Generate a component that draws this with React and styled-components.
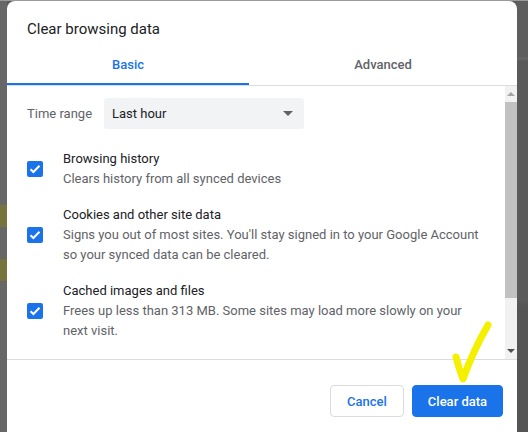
import React from 'react';
import styled, { createGlobalStyle } from 'styled-components';

const GlobalStyle = createGlobalStyle`
    html, body {
        margin: 0;
        padding: 0;
        background: #5b5b5b;
        font-family: Roboto, "Liberation Sans", Arial, sans-serif;
        overflow: hidden;
    }
`

const Page = styled.div`
    width: 528px;
    height: 432px;
    display: flex;
    border-top: 1px solid #9a9a9a;
    box-sizing: border-box;
    overflow: hidden;
`

const LeftEdge = styled.div`
    width: 7px;
    background: #676767;
    display: flex;
    flex-direction: column;
    padding-top: 204px;
    gap: 32px;
`

const Highlight = styled.div`
    height: ${props => props.h}px;
    background: #77733d;
`

const RightEdge = styled.div`
    flex: 1;
    background: linear-gradient(#5e5e5e 0, #5e5e5e 56px, #6a6a6a 57px, #5a5a5a 60px, #5a5a5a 300px, #555 305px);
`

const Dialog = styled.div`
    position: relative;
    width: 510px;
    height: 460px;
    background: #fff;
    border-radius: 8px 8px 0 0;
    display: flex;
    flex-direction: column;
`

const Title = styled.div`
    padding: 18px 20px 0 20px;
    font-size: 15px;
    line-height: 20px;
    color: #202124;
`

const Tabs = styled.div`
    margin-top: 4px;
    display: flex;
    height: 42px;
    border-bottom: 1px solid #dadce0;
`

const Tab = styled.div`
    width: ${props => props.w ? props.w + 'px' : 'auto'};
    flex: ${props => props.w ? 'none' : 1};
    display: flex;
    align-items: center;
    justify-content: center;
    font-size: 13px;
    font-weight: 500;
    color: ${props => props.active ? '#1a73e8' : '#5f6368'};
    box-shadow: ${props => props.active ? 'inset 0 -2px 0 #1a73e8' : 'none'};
`

const Body = styled.div`
    height: 273px;
    display: flex;
    border-bottom: 1px solid #dadce0;
`

const List = styled.div`
    flex: 1;
    padding: 12px 20px 0 20px;
    display: flex;
    flex-direction: column;
`

const RangeRow = styled.div`
    display: flex;
    align-items: center;
    height: 31px;
    margin-bottom: 20px;
`

const RangeLabel = styled.span`
    width: 77px;
    font-size: 13px;
    color: #5f6368;
`

const Select = styled.div`
    width: 200px;
    height: 31px;
    box-sizing: border-box;
    background: #f1f3f4;
    border-radius: 3px;
    padding: 0 8px;
    display: flex;
    align-items: center;
    justify-content: space-between;
    font-size: 13px;
    color: #202124;
`

const Arrow = styled.span`
    width: 0;
    height: 0;
    border-left: 5px solid transparent;
    border-right: 5px solid transparent;
    border-top: 5px solid #5f6368;
    margin-right: 3px;
`

const Item = styled.div`
    display: flex;
    align-items: center;
    margin-bottom: 16px;
`

const Box = styled.span`
    width: 16px;
    height: 16px;
    border-radius: 2px;
    background: #1a73e8;
    display: flex;
    align-items: center;
    justify-content: center;
    margin-right: 20px;
    flex: none;
`

const Texts = styled.div`
    font-size: 13px;
    line-height: 20px;
`

const ItemTitle = styled.div`
    color: #202124;
`

const ItemDesc = styled.div`
    color: #5f6368;
`

const Scrollbar = styled.div`
    width: 12px;
    background: #f1f1f1;
    display: flex;
    flex-direction: column;
    align-items: center;
`

const ScrollArrow = styled.span`
    margin: ${props => props.up ? '6px 0 6px' : 'auto 0 6px'};
    width: 0;
    height: 0;
    border-left: 4px solid transparent;
    border-right: 4px solid transparent;
    ${props => props.up
        ? 'border-bottom: 4px solid #a3a3a3;'
        : 'border-top: 4px solid #505050;'}
`

const Thumb = styled.div`
    width: 12px;
    height: 196px;
    background: #c1c1c1;
`

const Footer = styled.div`
    display: flex;
    justify-content: flex-end;
    gap: 8px;
    padding: 25px 14px 0 0;
`

const Button = styled.button`
    height: 32px;
    width: ${props => props.w}px;
    padding: 0;
    border-radius: 4px;
    border: 1px solid ${props => props.primary ? '#1a73e8' : '#dadce0'};
    background: ${props => props.primary ? '#1a73e8' : '#fff'};
    color: ${props => props.primary ? '#fff' : '#1a73e8'};
    font-family: Roboto, "Liberation Sans", Arial, sans-serif;
    font-size: 13px;
    font-weight: 500;
`

const Mark = styled.svg`
    position: absolute;
    left: 436px;
    top: 314px;
    pointer-events: none;
`

const Check = () => (
    <svg width="12" height="10" viewBox="0 0 12 10">
        <path d="M1.5 5.2 L4.4 8 L10.5 1.8" fill="none" stroke="#fff" strokeWidth="2" />
    </svg>
)

const items = [
    { title: 'Browsing history', desc: ['Clears history from all synced devices'] },
    { title: 'Cookies and other site data', desc: ["Signs you out of most sites. You'll stay signed in to your Google Account", 'so your synced data can be cleared.'] },
    { title: 'Cached images and files', desc: ['Frees up less than 313 MB. Some sites may load more slowly on your', 'next visit.'] },
]

export default function App() {
    return (
        <Page>
            <GlobalStyle />
            <LeftEdge>
                <Highlight h={22} />
                <Highlight h={22} />
            </LeftEdge>
            <Dialog>
                <Title>Clear browsing data</Title>
                <Tabs>
                    <Tab active w={242}>Basic</Tab>
                    <Tab>Advanced</Tab>
                </Tabs>
                <Body>
                    <List>
                        <RangeRow>
                            <RangeLabel>Time range</RangeLabel>
                            <Select>
                                <span>Last hour</span>
                                <Arrow />
                            </Select>
                        </RangeRow>
                        {items.map(item => (
                            <Item key={item.title}>
                                <Box><Check /></Box>
                                <Texts>
                                    <ItemTitle>{item.title}</ItemTitle>
                                    {item.desc.map(d => <ItemDesc key={d}>{d}</ItemDesc>)}
                                </Texts>
                            </Item>
                        ))}
                    </List>
                    <Scrollbar>
                        <ScrollArrow up />
                        <Thumb />
                        <ScrollArrow />
                    </Scrollbar>
                </Body>
                <Footer>
                    <Button w={74}>Cancel</Button>
                    <Button primary w={91}>Clear data</Button>
                </Footer>
                <Mark width="56" height="72" viewBox="0 0 56 72">
                    <path d="M13 42 Q16 54 20 64 Q30 36 45 10" fill="none" stroke="#f4f000" strokeWidth="7" strokeLinecap="round" strokeLinejoin="round" />
                </Mark>
            </Dialog>
            <RightEdge />
        </Page>
    )
}
